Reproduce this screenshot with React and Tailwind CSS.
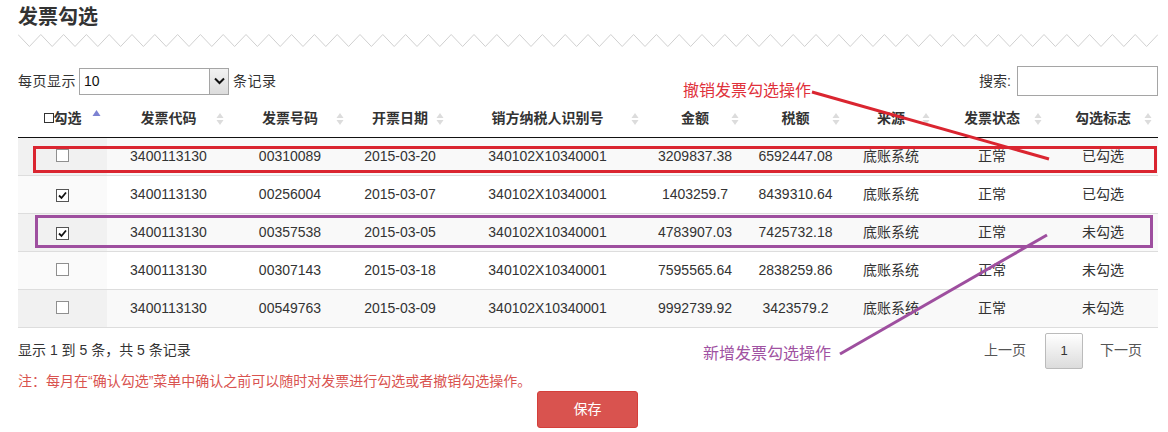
import React from "react";

const cols = [89, 123, 120, 100, 195, 100, 101, 90, 112, 110];
const headers = ["勾选", "发票代码", "发票号码", "开票日期", "销方纳税人识别号", "金额", "税额", "来源", "发票状态", "勾选标志"];
const rows = [
  [false, "3400113130", "00310089", "2015-03-20", "340102X10340001", "3209837.38", "6592447.08", "底账系统", "正常", "已勾选"],
  [true, "3400113130", "00256004", "2015-03-07", "340102X10340001", "1403259.7", "8439310.64", "底账系统", "正常", "已勾选"],
  [true, "3400113130", "00357538", "2015-03-05", "340102X10340001", "4783907.03", "7425732.18", "底账系统", "正常", "未勾选"],
  [false, "3400113130", "00307143", "2015-03-18", "340102X10340001", "7595565.64", "2838259.86", "底账系统", "正常", "未勾选"],
  [false, "3400113130", "00549763", "2015-03-09", "340102X10340001", "9992739.92", "3423579.2", "底账系统", "正常", "未勾选"],
];

function SortBoth() {
  return (
    <svg width="8" height="14" viewBox="0 0 8 14" className="absolute right-[6px] top-[9px]">
      <polygon points="0.5,6 4,1 7.5,6" fill="#dcdcdc" />
      <polygon points="0.5,8 4,13 7.5,8" fill="#dcdcdc" />
    </svg>
  );
}

function SortAsc() {
  return (
    <svg width="9" height="14" viewBox="0 0 9 14" className="absolute right-[6px] top-[6px]">
      <polygon points="0.5,7 4.5,1 8.5,7" fill="#7c82d2" />
    </svg>
  );
}

function Check({ checked }) {
  return (
    <span
      className={
        "inline-flex h-[13px] w-[13px] items-center justify-center bg-white border " +
        (checked ? "border-[#555]" : "border-[#8f8f8f]")
      }
    >
      {checked && (
        <svg width="9" height="9" viewBox="0 0 9 9">
          <polyline points="1,4.5 3.5,7 8,1.5" fill="none" stroke="#111" strokeWidth="1.8" />
        </svg>
      )}
    </span>
  );
}

function Zigzag() {
  const w = 1140;
  const n = 50;
  const p = w / n;
  const pts = [];
  for (let i = 0; i <= n; i++) {
    pts.push(`${i * p},0.5`);
    if (i < n) pts.push(`${i * p + p / 2},12.5`);
  }
  return (
    <svg width={w} height="13" viewBox={`0 0 ${w} 13`} className="block">
      <polyline points={pts.join(" ")} fill="none" stroke="#d0d0d0" strokeWidth="1" />
    </svg>
  );
}

export default function App() {
  return (
    <div
      className="relative w-[1168px] h-[432px] bg-white pl-[18px] pr-[10px] text-[14px] text-[#333] overflow-hidden"
      style={{ fontFamily: '"Liberation Sans", "Noto Sans CJK SC", sans-serif' }}
    >
      <div className="pt-[3px] h-[31px] text-[20px] leading-[28px] font-bold text-[#333]">发票勾选</div>
      <div className="mt-[3px]">
        <Zigzag />
      </div>

      <div className="mt-[19px] flex h-[30px] items-center justify-between">
        <div className="flex items-center">
          <span className="w-[61px] tracking-[0.5px]">每页显示</span>
          <div className="flex h-[27px] w-[150px] items-center border border-[#a5a5a5] bg-white">
            <span className="flex-1 pl-[4px] text-[14px] text-[#111]">10</span>
            <span className="flex h-[25px] w-[19px] items-center justify-center border-l border-[#a5a5a5] bg-gradient-to-b from-[#f2f2f2] to-[#dcdcdc]">
              <svg width="11" height="8" viewBox="0 0 11 8">
                <polyline points="1,1.5 5.5,6 10,1.5" fill="none" stroke="#111" strokeWidth="2" />
              </svg>
            </span>
          </div>
          <span className="ml-[4px] tracking-[0.5px]">条记录</span>
        </div>
        <div className="flex items-center">
          <span className="mr-[6px]">搜索:</span>
          <div className="h-[30px] w-[141px] border border-[#a5a5a5] bg-white" />
        </div>
      </div>

      <table className="mt-[7px] table-fixed border-collapse" style={{ width: 1140 }}>
        <colgroup>
          {cols.map((w, i) => (
            <col key={i} style={{ width: w }} />
          ))}
        </colgroup>
        <thead>
          <tr className="h-[34px] border-b border-[#111]">
            {headers.map((h, i) => (
              <th key={i} className="relative p-0 pb-[3px] text-center font-bold text-[14px] text-[#333]">
                {i === 0 ? (
                  <span className="inline-flex items-center">
                    <span className="inline-block h-[10px] w-[10px] border border-[#333] bg-white" />
                    <span>{h}</span>
                  </span>
                ) : (
                  h
                )}
                {i === 0 ? <SortAsc /> : <SortBoth />}
              </th>
            ))}
          </tr>
        </thead>
        <tbody>
          {rows.map((r, ri) => {
            const odd = ri % 2 === 0;
            return (
              <tr
                key={ri}
                className={
                  "h-[38px] " +
                  (ri > 0 ? "border-t border-[#dddddd] " : "") +
                  (ri === rows.length - 1 ? "border-b border-[#111] " : "") +
                  (odd ? "bg-[#f9f9f9]" : "bg-white")
                }
              >
                {r.map((c, ci) => (
                  <td
                    key={ci}
                    className={
                      "p-0 text-center text-[14px] text-[#333] " +
                      (ci === 0 ? (odd ? "bg-[#f1f1f1]" : "bg-[#fafafa]") : "")
                    }
                  >
                    {ci === 0 ? (
                      <span className="inline-flex translate-y-[1px]">
                        <Check checked={c} />
                      </span>
                    ) : (
                      c
                    )}
                  </td>
                ))}
              </tr>
            );
          })}
        </tbody>
      </table>

      <div className="mt-[5px] flex h-[36px] items-center justify-between">
        <span>显示 1 到 5 条，共 5 条记录</span>
        <div className="flex items-center">
          <span className="text-[#555]">上一页</span>
          <span className="ml-[19px] flex h-[36px] w-[38px] items-center justify-center rounded-[2px] border border-[#bbb] bg-gradient-to-b from-white to-[#dcdcdc] text-[13px] text-[#333]">
            1
          </span>
          <span className="ml-[17px] mr-[16px] text-[#555]">下一页</span>
        </div>
      </div>

      <div className="mt-[2px] h-[20px] leading-[20px] text-[#d9534f]">
        注：每月在“确认勾选”菜单中确认之前可以随时对发票进行勾选或者撤销勾选操作。
      </div>

      <button className="ml-[519px] flex h-[37px] w-[101px] items-center justify-center rounded-[3px] border border-[#d43f3a] bg-[#d9534f] text-[14px] text-white">
        保存
      </button>

      {/* Annotations overlay */}
      <div className="pointer-events-none absolute left-[33px] top-[146px] h-[27px] w-[1124px] border-[3px] border-[#da2530]" />
      <div className="pointer-events-none absolute left-[35px] top-[215px] h-[33px] w-[1118px] border-[3px] border-[#9e4f9f]" />
      <svg className="pointer-events-none absolute left-0 top-0" width="1168" height="432" viewBox="0 0 1168 432">
        <line x1="812" y1="92" x2="1049" y2="159" stroke="#da2530" strokeWidth="3" />
        <line x1="840" y1="354" x2="1047" y2="235" stroke="#9e4f9f" strokeWidth="3" />
      </svg>
      <div className="pointer-events-none absolute left-[683px] top-[80px] text-[16px] leading-[22px] text-[#e0313b]">
        撤销发票勾选操作
      </div>
      <div className="pointer-events-none absolute left-[703px] top-[343px] text-[16px] leading-[22px] text-[#a052a2]">
        新增发票勾选操作
      </div>
    </div>
  );
}
